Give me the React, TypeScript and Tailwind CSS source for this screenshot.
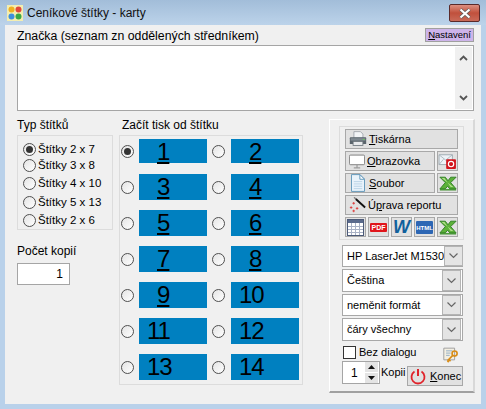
import type { ReactNode } from 'react';

const FONT = 'font-["Liberation_Sans",Arial,sans-serif]';

function Radio({ checked = false }: { checked?: boolean }) {
  return (
    <span className="flex h-[13px] w-[13px] shrink-0 items-center justify-center rounded-full border border-[#4f4f4f] bg-gradient-to-br from-[#e4e4e4] to-white">
      {checked && <span className="h-[7px] w-[7px] rounded-full bg-[#333]" />}
    </span>
  );
}

function Excel() {
  return (
    <svg className="shrink-0" width="18" height="15" viewBox="0 0 20 16">
      <path d="M1 1h6l3 4 3-4h6l-6 6 6 7h-7l-2.500-3L7 14H1l6-7z" fill="#5cb13a" stroke="#2e7d22" strokeWidth="1" />
      <path d="M3 2h3l7 10h3z" fill="#b4e08e" />
      <path d="M1 15h18" stroke="#3c8f2a" strokeWidth="1.500" />
    </svg>
  );
}

function Mail() {
  return (
    <svg className="shrink-0" width="19" height="16" viewBox="0 0 21 18">
      <path d="M1 2h15v11H1z" fill="#eef3f7" stroke="#9aa6ad" />
      <path d="M1 2l7.500 6L16 2M1 13l5-6M16 13l-5-6" fill="none" stroke="#a8b4bb" />
      <rect x="9" y="7" width="11" height="11" rx="1" fill="#d2141c" />
      <circle cx="14.500" cy="12.500" r="3" fill="none" stroke="#fff" strokeWidth="1.300" />
    </svg>
  );
}

function Printer() {
  return (
    <svg className="shrink-0" width="18" height="16" viewBox="0 0 22 18">
      <path d="M6 0h8l3 3v5H6z" fill="#f2f4f6" stroke="#9aa1a8" />
      <path d="M2 7h18a1 1 0 0 1 1 1v7H1V8a1 1 0 0 1 1-1z" fill="#5a646c" />
      <rect x="2" y="8" width="18" height="3" fill="#808a92" />
      <rect x="5" y="12" width="12" height="5" fill="#e8eaec" stroke="#6b747b" />
      <rect x="17" y="9" width="2" height="1" fill="#5fe04a" />
    </svg>
  );
}

function Monitor() {
  return (
    <svg className="shrink-0" width="16" height="15" viewBox="0 0 20 17">
      <rect x="0.500" y="0.500" width="19" height="12" rx="1.500" fill="#fff" stroke="#666" />
      <path d="M10 13v3M6 16.500h8" stroke="#777" fill="none" />
    </svg>
  );
}

function FileIcon() {
  return (
    <svg className="shrink-0" width="14" height="18" viewBox="0 0 15 19">
      <path d="M0.500 0.500h9l5 5v13h-14z" fill="#e9f3fb" stroke="#5b93b8" />
      <path d="M9.500 0.500v5h5z" fill="#fff" stroke="#5b93b8" />
      <path d="M3 8h9M3 10.500h9M3 13h9M3 15.500h9" stroke="#b9d3e6" />
    </svg>
  );
}

function Wand() {
  return (
    <svg className="shrink-0" width="17" height="16" viewBox="0 0 20 18">
      <path d="M8 2l11 10" stroke="#111" strokeWidth="2.200" />
      <path d="M6 0l2 2" stroke="#777" strokeWidth="1.500" />
      <path d="M4 7h3M5.500 5.500v3M1 12h3M2.500 10.500v3M8 13h3M9.500 11.500v3M4 16h3M5.500 14.500v3" stroke="#d33" />
    </svg>
  );
}

function TableIcon() {
  return (
    <svg className="shrink-0" width="17" height="17" viewBox="0 0 17 17">
      <rect x="0.500" y="0.500" width="16" height="16" fill="#fff" stroke="#4c5a78" />
      <rect x="1" y="1" width="15" height="3" fill="#5a6a8c" />
      <path d="M1 7.500h15M1 10.500h15M1 13.500h15M4.500 4v12M8.500 4v12M12.500 4v12" stroke="#a9b2c6" />
    </svg>
  );
}

function BadgeIcon({ bg, fg, label, h, size }: { bg: string; fg: string; label: string; h: number; size: number }) {
  return (
    <svg className="shrink-0" width="17" height={h} viewBox={`0 0 17 ${h}`}>
      <rect width="17" height={h} rx="1" fill={bg} />
      <text x="8.500" y={h / 2 + 2.500} textAnchor="middle" fontSize={size} fontWeight="700" fontFamily="Liberation Sans" fill={fg}>
        {label}
      </text>
    </svg>
  );
}

function KeyDoc() {
  return (
    <svg className="shrink-0" width="16" height="18" viewBox="0 0 17 20">
      <path d="M0.500 3.500h12v13h-12z" fill="#f3efe2" stroke="#9a9a9a" />
      <path d="M3 6.500h7M3 9h5M3 11.500h4" stroke="#8aa9c4" />
      <circle cx="12.500" cy="9.500" r="2.800" fill="none" stroke="#d88c16" strokeWidth="1.800" />
      <path d="M10.500 11.500l-6 6M6 16l2 2M4.500 17.500l1.500 1.500" stroke="#d88c16" strokeWidth="1.800" fill="none" />
    </svg>
  );
}

function Btn({ className, children }: { className: string; children: ReactNode }) {
  return (
    <div className={`flex items-center whitespace-nowrap border border-[#a8a8a8] bg-[#e1e1e1] ${className}`}>{children}</div>
  );
}

function Combo({ text, className }: { text: string; className: string }) {
  return (
    <div className={`flex w-[121px] items-center border border-[#a8a8a8] bg-white pl-[4px] pr-[1px] ${className}`}>
      <span className="flex-1 whitespace-nowrap text-[11px]">{text}</span>
      <span className="flex h-full w-[19px] shrink-0 items-center justify-center border border-[#b4b4b4] bg-[#e4e4e4]">
        <svg width="9" height="6" viewBox="0 0 9 6">
          <path d="M0.500 0.500L4.500 4.500L8.500 0.500" fill="none" stroke="#666" strokeWidth="1.200" />
        </svg>
      </span>
    </div>
  );
}

function Cell({ n }: { n: number }) {
  const under = n < 10;
  return (
    <div className={`h-full w-[68px] bg-[#0080c0] text-[24px] leading-[26px] tracking-[-1px] text-black ${under ? 'pl-[18px] underline underline-offset-2' : 'pl-[8px]'}`}>
      {n}
    </div>
  );
}

const ROWS = [
  [1, 2],
  [3, 4],
  [5, 6],
  [7, 8],
  [9, 10],
  [11, 12],
  [13, 14],
];

const TYPES = [
  { label: 'Štítky 2 x 7', mt: 'mt-[6px]' },
  { label: 'Štítky 3 x 8', mt: 'mt-[2px]' },
  { label: 'Štítky 4 x 10', mt: 'mt-[4px]' },
  { label: 'Štítky 5 x 13', mt: 'mt-[5px]' },
  { label: 'Štítky 2 x 6', mt: 'mt-[4px]' },
];

export default function App() {
  return (
    <div className={`${FONT} flex h-[409px] w-[486px] flex-col overflow-hidden bg-[#b9d1ea] text-black`}>
      {/* Title bar */}
      <div className="flex h-[25px] shrink-0 items-start bg-gradient-to-b from-[#a2bdd9] to-[#bcd3ea] pl-[7px] pr-[6px]">
        <svg className="mt-[5px]" width="16" height="16" viewBox="0 0 16 16">
          <rect width="16" height="16" fill="#f4eeb0" />
          <circle cx="4.500" cy="4.500" r="3" fill="#f0b020" />
          <circle cx="11.500" cy="4.500" r="3" fill="#e2483a" />
          <circle cx="4.500" cy="11.500" r="3" fill="#3f8fdc" />
          <circle cx="11.500" cy="11.500" r="3" fill="#3aa845" />
        </svg>
        <span className="ml-[4px] mt-[5px] text-[12px] leading-[16px] text-[#111]">Ceníkové štítky - karty</span>
        <div className="ml-auto mt-[4px] flex h-[18px] w-[31px] items-center justify-center rounded-[2px] border border-[#5a2a2a] bg-gradient-to-b from-[#dc8f80] via-[#c0503c] to-[#c96a58]">
          <svg width="14" height="11" viewBox="0 0 14 11">
            <path d="M2.500 1.500L11.500 9.500M11.500 1.500L2.500 9.500" stroke="#5b5b5b" strokeWidth="3.600" />
            <path d="M2.500 1.500L11.500 9.500M11.500 1.500L2.500 9.500" stroke="#fff" strokeWidth="2.200" />
          </svg>
        </div>
      </div>

      {/* Client area */}
      <div className="mx-[5px] flex h-[379px] flex-col bg-[#f0f0f0] pl-[12px]">
        <div className="flex h-[20px] w-[457px] items-start justify-between">
          <span className="mt-[3px] text-[12.300px] leading-[16px]">Značka (seznam zn oddělených středníkem)</span>
          <span className="mt-[3px] h-[14px] border border-[#a0a0a0] bg-[#cdb4ea] px-[2px] text-[9.500px] leading-[12px]">
            <span className="underline">N</span>astavení
          </span>
        </div>

        <div className="flex h-[66px] w-[457px] justify-end border border-[#a5a5a5] bg-white p-px">
          <div className="flex w-[17px] flex-col items-center justify-between bg-[#f0f0f0] py-[8px]">
            <svg width="9" height="6" viewBox="0 0 9 6">
              <path d="M1 5L4.500 1.500L8 5" fill="none" stroke="#555" strokeWidth="1.800" />
            </svg>
            <svg width="9" height="6" viewBox="0 0 9 6">
              <path d="M1 1L4.500 4.500L8 1" fill="none" stroke="#555" strokeWidth="1.800" />
            </svg>
          </div>
        </div>

        <div className="flex">
          {/* Left column */}
          <div className="w-[96px] shrink-0">
            <div className="mt-[6px] h-[16px] text-[12px] leading-[16px]">Typ štítků</div>
            <div className="mt-[2px] h-[95px] border border-[#dcdcdc]">
              {TYPES.map((t, i) => (
                <div key={t.label} className={`flex h-[14px] items-center gap-[2px] pl-[5px] text-[11.500px] ${t.mt}`}>
                  <Radio checked={i === 0} />
                  <span className="whitespace-nowrap leading-[14px]">{t.label}</span>
                </div>
              ))}
            </div>
            <div className="mt-[13px] h-[16px] text-[12px] leading-[16px]">Počet kopií</div>
            <div className="mt-[4px] h-[22px] w-[53px] border border-[#a5a5a5] bg-white pr-[6px] text-right text-[12px] leading-[20px]">
              1
            </div>
          </div>

          {/* Label start grid */}
          <div className="ml-[6px] w-[184px] shrink-0">
            <div className="ml-[3px] mt-[6px] h-[16px] whitespace-nowrap text-[12px] leading-[16px]">Začít tisk od štítku</div>
            <div className="mt-[2px] flex h-[250px] flex-col gap-[10px] border border-[#dcdcdc] pt-[3px]">
              {ROWS.map((row, i) => (
                <div key={row[0]} className={`flex items-center ${i === 0 ? 'mb-px h-[24px]' : 'h-[26px]'}`}>
                  <div className="ml-px flex h-full items-center">
                    <Radio checked={i === 0} />
                  </div>
                  <div className="ml-[5px] h-full">
                    <Cell n={row[0]} />
                  </div>
                  <div className="ml-[5px] flex h-full items-center">
                    <Radio />
                  </div>
                  <div className="ml-[6px] h-full">
                    <Cell n={row[1]} />
                  </div>
                </div>
              ))}
            </div>
          </div>

          {/* Right panel */}
          <div className="ml-[26px] mt-[8px] h-[274px] w-[146px] shrink-0 border-b-2 border-l border-r-2 border-t border-b-[#a0a0a0] border-l-white border-r-[#d8d8d8] border-t-white pl-[9px]">
            <div className="mt-[6px] flex h-[114px] w-[125px] flex-col gap-[2px] border border-[#dcdcdc] px-[5px] pt-[2px] text-[11px]">
              <Btn className="h-[20px] w-[113px] pl-[3px]">
                <Printer />
                <span className="ml-[2px]"><span className="underline">T</span>iskárna</span>
              </Btn>
              <div className="flex h-[20px] gap-[2px]">
                <Btn className="h-full w-[90px] pl-[3px]">
                  <Monitor />
                  <span className="ml-[2px]"><span className="underline">O</span>brazovka</span>
                </Btn>
                <Btn className="h-full w-[21px] justify-center"><Mail /></Btn>
              </div>
              <div className="flex h-[20px] gap-[2px]">
                <Btn className="h-full w-[90px] pl-[5px]">
                  <FileIcon />
                  <span className="ml-[4px]"><span className="underline">S</span>oubor</span>
                </Btn>
                <Btn className="h-full w-[21px] justify-center"><Excel /></Btn>
              </div>
              <Btn className="h-[20px] w-[113px] pl-[3px]">
                <Wand />
                <span className="ml-[2px]">Ú<span className="underline">p</span>rava reportu</span>
              </Btn>
              <div className="flex h-[20px] gap-[2px]">
                <Btn className="h-full w-[21px] justify-center"><TableIcon /></Btn>
                <Btn className="h-full w-[21px] justify-center"><BadgeIcon bg="#e0151b" fg="#fff" label="PDF" h={9} size={7} /></Btn>
                <Btn className="h-full w-[21px] justify-center">
                  <span className="text-[18px] font-bold italic leading-none text-[#10609c]">W</span>
                </Btn>
                <Btn className="h-full w-[21px] justify-center"><BadgeIcon bg="#2c66b4" fg="#fff" label="HTML" h={13} size={6} /></Btn>
                <Btn className="h-full w-[21px] justify-center"><Excel /></Btn>
              </div>
            </div>

            <div className="ml-[3px] mt-[5px] flex flex-col gap-[2px]">
              <Combo text="HP LaserJet M1530" className="h-[22px]" />
              <Combo text="Čeština" className="h-[23px]" />
              <Combo text="neměnit formát" className="h-[22px]" />
              <Combo text="čáry všechny" className="h-[23px]" />
            </div>

            <div className="ml-[4px] mt-[3px] flex h-[16px] w-[116px] items-center text-[11px]">
              <span className="h-[13px] w-[13px] shrink-0 border border-[#333] bg-white" />
              <span className="ml-[3px]">Bez dialogu</span>
              <span className="mb-[-3px] ml-auto"><KeyDoc /></span>
            </div>

            <div className="ml-[3px] mt-px flex h-[25px] items-start text-[11px]">
              <div className="flex h-[23px] w-[38px] items-center border border-[#a5a5a5] bg-white pl-[8px]">
                <span className="flex-1 text-[12px]">1</span>
                <div className="mr-px flex flex-col gap-px">
                  <span className="flex h-[10px] w-[13px] items-center justify-center bg-[#e4e4e4]">
                    <svg width="7" height="4" viewBox="0 0 7 4"><path d="M3.500 0L7 4H0z" fill="#111" /></svg>
                  </span>
                  <span className="flex h-[10px] w-[13px] items-center justify-center bg-[#e4e4e4]">
                    <svg width="7" height="4" viewBox="0 0 7 4"><path d="M0 0h7L3.500 4z" fill="#111" /></svg>
                  </span>
                </div>
              </div>
              <span className="ml-px mt-[3px] w-[25px]">Kopii</span>
              <Btn className="ml-px mt-[5px] h-[20px] w-[56px] pl-[2px]">
                <svg className="shrink-0" width="16" height="17" viewBox="0 0 16 17">
                  <path d="M8 1v7" stroke="#e0222a" strokeWidth="2" fill="none" />
                  <path d="M4.500 3.500a6.500 6.500 0 1 0 7 0" stroke="#e0222a" strokeWidth="1.800" fill="none" />
                </svg>
                <span className="ml-[4px]"><span className="underline">K</span>onec</span>
              </Btn>
            </div>
          </div>
        </div>
      </div>
    </div>
  );
}
